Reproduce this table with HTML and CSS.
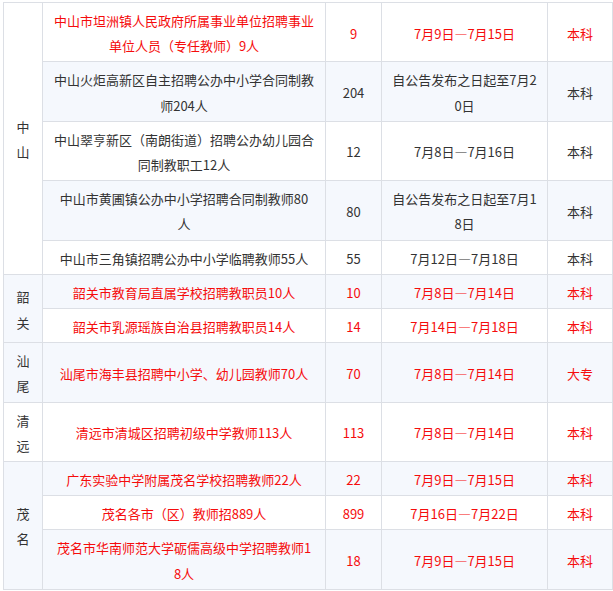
FILE: index.html
```html
<!DOCTYPE html>
<html lang="zh-CN">
<head>
<meta charset="utf-8">
<title>广东教师招聘</title>
<link rel="stylesheet" href="styles.css">
</head>
<body>
<table class="jobs">
  <colgroup>
    <col class="c-region">
    <col class="c-name">
    <col class="c-num">
    <col class="c-date">
    <col class="c-edu">
  </colgroup>
  <tbody>
    <tr class="hot">
      <td class="region plain" rowspan="5">中山</td>
      <td>中山市坦洲镇人民政府所属事业单位招聘事业<br>单位人员（专任教师）9人</td>
      <td>9</td>
      <td>7月9日—7月15日</td>
      <td>本科</td>
    </tr>
    <tr>
      <td>中山火炬高新区自主招聘公办中小学合同制教<br>师204人</td>
      <td>204</td>
      <td>自公告发布之日起至7月2<br>0日</td>
      <td>本科</td>
    </tr>
    <tr>
      <td>中山翠亨新区（南朗街道）招聘公办幼儿园合<br>同制教职工12人</td>
      <td>12</td>
      <td>7月8日—7月16日</td>
      <td>本科</td>
    </tr>
    <tr>
      <td>中山市黄圃镇公办中小学招聘合同制教师80<br>人</td>
      <td>80</td>
      <td>自公告发布之日起至7月1<br>8日</td>
      <td>本科</td>
    </tr>
    <tr>
      <td>中山市三角镇招聘公办中小学临聘教师55人</td>
      <td>55</td>
      <td>7月12日—7月18日</td>
      <td>本科</td>
    </tr>
    <tr class="hot">
      <td class="region plain" rowspan="2">韶关</td>
      <td>韶关市教育局直属学校招聘教职员10人</td>
      <td>10</td>
      <td>7月8日—7月14日</td>
      <td>本科</td>
    </tr>
    <tr class="hot">
      <td>韶关市乳源瑶族自治县招聘教职员14人</td>
      <td>14</td>
      <td>7月14日—7月18日</td>
      <td>本科</td>
    </tr>
    <tr class="hot">
      <td class="region plain">汕尾</td>
      <td>汕尾市海丰县招聘中小学、幼儿园教师70人</td>
      <td>70</td>
      <td>7月8日—7月14日</td>
      <td>大专</td>
    </tr>
    <tr class="hot">
      <td class="region plain">清远</td>
      <td>清远市清城区招聘初级中学教师113人</td>
      <td>113</td>
      <td>7月8日—7月14日</td>
      <td>本科</td>
    </tr>
    <tr class="hot">
      <td class="region plain" rowspan="3">茂名</td>
      <td>广东实验中学附属茂名学校招聘教师22人</td>
      <td>22</td>
      <td>7月9日—7月15日</td>
      <td>本科</td>
    </tr>
    <tr class="hot">
      <td>茂名各市（区）教师招889人</td>
      <td>899</td>
      <td>7月16日—7月22日</td>
      <td>本科</td>
    </tr>
    <tr class="hot">
      <td>茂名市华南师范大学砺儒高级中学招聘教师1<br>8人</td>
      <td>18</td>
      <td>7月9日—7月15日</td>
      <td>本科</td>
    </tr>
  </tbody>
</table>
</body>
</html>
```
FILE: styles.css
```css
html, body {
  margin: 0;
  padding: 0;
  background: #ffffff;
}

body {
  font-family: "Microsoft YaHei", "Noto Sans CJK SC", "Noto Sans", sans-serif;
  font-size: 13px;
  color: #333333;
}

.jobs {
  margin: 2px 0 0 3px;
  width: 609px;
  border-collapse: collapse;
  table-layout: fixed;
}

.c-region { width: 39px; }
.c-name { width: 283px; }
.c-num { width: 56px; }
.c-date { width: 166px; }
.c-edu { width: 65px; }

.jobs td {
  border: 1px solid #dcdfe5;
  padding: 5px 8px 3px;
  line-height: 25.2px;
  text-align: center;
  vertical-align: middle;
  white-space: nowrap;
}

.jobs td.region {
  white-space: normal;
  word-break: break-all;
  padding: 5px 12px 3px;
}

.jobs tr:nth-child(odd) td {
  background: #ffffff;
}

.jobs tr:nth-child(even) td {
  background: #f5f8fd;
}

.jobs tr.hot td {
  color: #f50c0c;
}

.jobs tr.hot td.plain {
  color: #333333;
}
```
